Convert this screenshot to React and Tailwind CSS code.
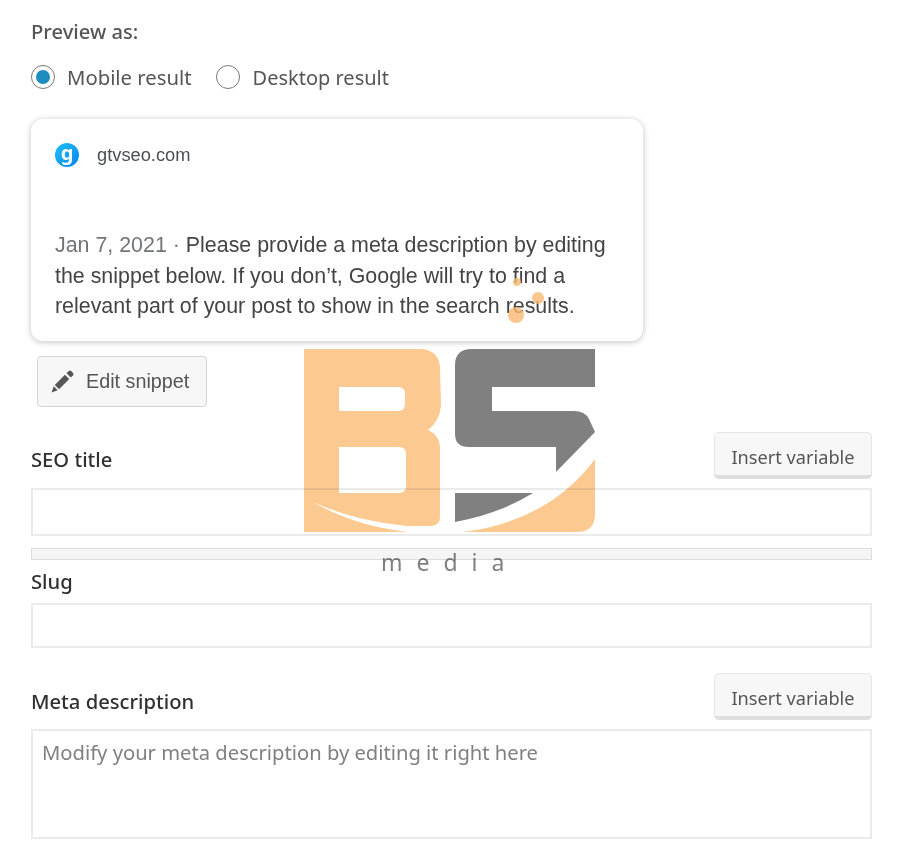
import React from "react";

const ui = { fontFamily: '"Noto Sans", "Open Sans", sans-serif' };
const ar = { fontFamily: '"Liberation Sans", Arial, sans-serif' };

function InsertButton() {
  return (
    <button className="w-[158px] h-[47px] pt-[7px] rounded-[5px] border border-[#e6e6e6] border-b-[4px] border-b-[#dedede] bg-[#f7f7f7] text-[18.2px] text-[#555]">
      Insert variable
    </button>
  );
}

function Pencil() {
  return (
    <svg width="23" height="23" viewBox="0 0 24 24" fill="#555" className="shrink-0">
      <path d="M16.2 3.4 L18.6 1 Q19.8 0 21 1 L23 3 Q24 4.2 23 5.4 L20.6 7.8 Z" />
      <path d="M14.6 5 L19 9.4 L8.4 20 L4 15.6 Z" />
      <path d="M2.9 17 L7 21.1 L0.6 23.4 Z" />
    </svg>
  );
}

function Logo() {
  return (
    <div className="absolute left-[304px] top-[349px] w-[292px] h-[228px] mix-blend-multiply pointer-events-none">
      <svg width="292" height="184" viewBox="0 0 292 184" className="block">
        <path
          fillRule="evenodd"
          fill="#fcca90"
          d="M0 0H118Q136 2 136 20L137 56Q136 72 124 81Q136 86 136 100V168Q136 176 128 177H103Q50 172 9 153Q48 176 103 183H0ZM35 38V62H94Q101 62 101 55V45Q101 38 94 38ZM35 98V144H95Q102 144 102 137V105Q102 98 95 98Z"
        />
        <path
          fill="#808080"
          d="M168 0H291V38H188V62H270Q281 62 285 70L291 83L252 123V98H165Q151 98 151 85V16Q151 0 168 0Z"
        />
        <path fill="#808080" d="M151 144H229Q195 165 151 173Z" />
        <path fill="#fcca90" d="M291 110V165Q291 183 273 183H159Q245 172 291 110Z" />
      </svg>
      <div
        className="absolute left-[77px] top-[198px] text-[23px] leading-[30px] tracking-[14px] text-[#808080]"
        style={ui}
      >
        media
      </div>
    </div>
  );
}

export default function App() {
  return (
    <div className="relative w-[899px] h-[851px] overflow-hidden bg-white" style={ui}>
      <div className="px-[31px] w-[903px] pt-[17px]">
        <div className="text-[20.2px] font-medium leading-[28px] text-[#555]">Preview as:</div>

        <div className="mt-[18px] flex items-center h-[28px] text-[20.3px] text-[#555]">
          <span className="w-[24px] h-[24px] rounded-full border border-[#777] flex items-center justify-center">
            <span className="w-[14px] h-[14px] rounded-full bg-[#1e8cbe]" />
          </span>
          <span className="ml-[12px]">Mobile result</span>
          <span className="ml-[24px] w-[24px] h-[24px] rounded-full border border-[#777]" />
          <span className="ml-[13px] text-[20px] pt-[1px]">Desktop result</span>
        </div>

        <div
          className="mt-[28px] w-[612px] h-[222px] rounded-[12px] bg-white shadow-[0_1px_6px_rgba(32,33,36,0.28)] pl-[24px] pr-[20px] pt-[24px]"
          style={ar}
        >
          <div className="flex items-center h-[24px]">
            <span
              className="w-[24px] h-[24px] rounded-full bg-gradient-to-br from-[#22c1f5] to-[#0b84ee] flex items-center justify-center text-white font-bold text-[20px] leading-[20px] pb-[4px]"
              style={ui}
            >
              g
            </span>
            <span className="ml-[18px] text-[18.3px] text-[#4b4f53]">gtvseo.com</span>
          </div>
          <p className="mt-[63px] text-[21.4px] leading-[30.5px] text-[#444]">
            <span className="text-[#70757a]">Jan 7, 2021 · </span>
            Please provide a meta description by editing the snippet below. If you don’t, Google will try to find a relevant part of your post to show in the search results.
          </p>
        </div>

        <button
          className="mt-[15px] ml-[6px] w-[170px] h-[51px] rounded-[4px] border border-[#d4d4d4] bg-[#f7f7f7] flex items-center pl-[13px] text-[19.8px] text-[#555]"
          style={ar}
        >
          <Pencil />
          <span className="ml-[12px]">Edit snippet</span>
        </button>

        <div className="mt-[25px] flex items-end justify-between h-[47px]">
          <label className="text-[20.2px] font-medium leading-[28px] text-[#303030] mb-[6px]">SEO title</label>
          <InsertButton />
        </div>
        <div className="mt-[9px] h-[48px] border-2 border-[#ebebeb] bg-white" />
        <div className="mt-[12px] h-[12px] border border-[#dcdcdc] bg-[#f5f5f5]" />
        <label className="block mt-[7px] text-[20.2px] font-medium leading-[28px] text-[#303030]">Slug</label>
        <div className="mt-[8px] h-[45px] border-2 border-[#ebebeb] bg-white" />

        <div className="mt-[25px] flex items-end justify-between h-[47px]">
          <label className="text-[20.2px] font-medium leading-[28px] text-[#303030] mb-[5px]">Meta description</label>
          <InsertButton />
        </div>
        <div className="mt-[9px] h-[110px] border-2 border-[#ebebeb] bg-white pl-[9px] pt-[5px] text-[20.2px] leading-[32px] text-[#808080]">
          Modify your meta description by editing it right here
        </div>
      </div>

      <Logo />
      <span className="absolute left-[513px] top-[278px] w-[8px] h-[8px] rounded-full bg-[#f9b870] opacity-80" />
      <span className="absolute left-[532px] top-[292px] w-[12px] h-[12px] rounded-full bg-[#f9b870] opacity-80" />
      <span className="absolute left-[508px] top-[307px] w-[16px] h-[16px] rounded-full bg-[#f9b870] opacity-80" />
    </div>
  );
}
